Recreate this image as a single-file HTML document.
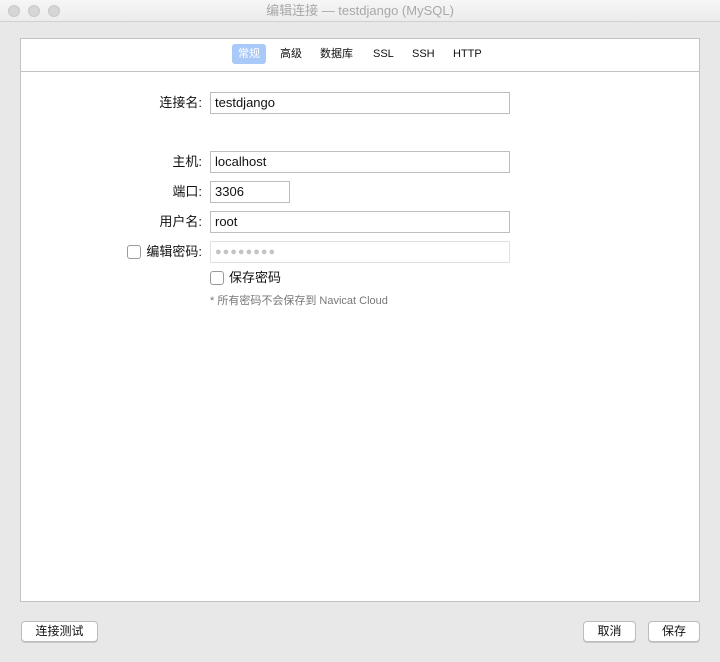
<!DOCTYPE html>
<html><head><meta charset="utf-8"><style>
*{box-sizing:border-box;margin:0;padding:0}
body{width:720px;height:662px;background:#e8e8e8;font-family:"Liberation Sans","Noto Sans CJK SC",sans-serif;font-size:13px;color:#111;position:relative;overflow:hidden}
.tb{position:absolute;left:0;top:0;width:720px;height:22px;background:linear-gradient(#f6f6f6,#ececec);border-bottom:1px solid #d0d0d0;text-align:center;line-height:22px;color:#a8a8a8;font-size:13px}
.dot{position:absolute;top:5px;width:12px;height:12px;border-radius:50%;background:#d6d6d6;border:1px solid #c8c8c8}
.panel{position:absolute;left:20px;top:38px;width:680px;height:564px;background:#fff;border:1px solid #c2c2c2}
.tabs{position:absolute;left:0;top:0;width:678px;height:33px;border-bottom:1px solid #c2c2c2}
.tab{position:absolute;top:5px;height:20px;line-height:20px;font-size:11px;color:#111}
.tab.on{background:#a9c9f9;color:#fff;border-radius:3px;padding:0 6px}
.lbl{position:absolute;text-align:right;width:80px;left:122px;font-size:13px;line-height:22px}
.in{position:absolute;left:210px;width:300px;height:22px;border:1px solid #bdbdbd;padding-left:4px;line-height:20px;font-size:13px}
.cb{position:absolute;width:14px;height:14px;border:1px solid #9a9a9a;border-radius:3px;background:#fff}
.btn{position:absolute;top:621px;height:21px;background:#fff;border:1px solid #bcbcbc;border-radius:4px;text-align:center;line-height:19px;font-size:12px;box-shadow:0 1px 0 #c8c8c8}
</style></head><body>
<div class="tb">编辑连接 — testdjango (MySQL)</div>
<div class="dot" style="left:8px"></div><div class="dot" style="left:28px"></div><div class="dot" style="left:48px"></div>
<div class="panel"><div class="tabs">
<div class="tab on" style="left:211px">常规</div>
<div class="tab" style="left:259px">高级</div>
<div class="tab" style="left:299px">数据库</div>
<div class="tab" style="left:352px">SSL</div>
<div class="tab" style="left:391px">SSH</div>
<div class="tab" style="left:432px">HTTP</div>
</div></div>
<div class="lbl" style="top:92px">连接名:</div><div class="in" style="top:92px">testdjango</div>
<div class="lbl" style="top:151px">主机:</div><div class="in" style="top:151px">localhost</div>
<div class="lbl" style="top:181px">端口:</div><div class="in" style="top:181px;width:80px">3306</div>
<div class="lbl" style="top:211px">用户名:</div><div class="in" style="top:211px">root</div>
<div class="cb" style="left:127px;top:245px"></div>
<div class="lbl" style="top:241px">编辑密码:</div><div class="in" style="top:241px;border-color:#e0e0e0;color:#c4c4c4;font-size:11px;letter-spacing:1px">●●●●●●●●</div>
<div class="cb" style="left:210px;top:271px"></div>
<div style="position:absolute;left:229px;top:269px;line-height:18px">保存密码</div>
<div style="position:absolute;left:210px;top:292px;font-size:11px;color:#777">* 所有密码不会保存到 Navicat Cloud</div>
<div class="btn" style="left:21px;width:77px">连接测试</div>
<div class="btn" style="left:583px;width:53px">取消</div>
<div class="btn" style="left:648px;width:52px">保存</div>
</body></html>
